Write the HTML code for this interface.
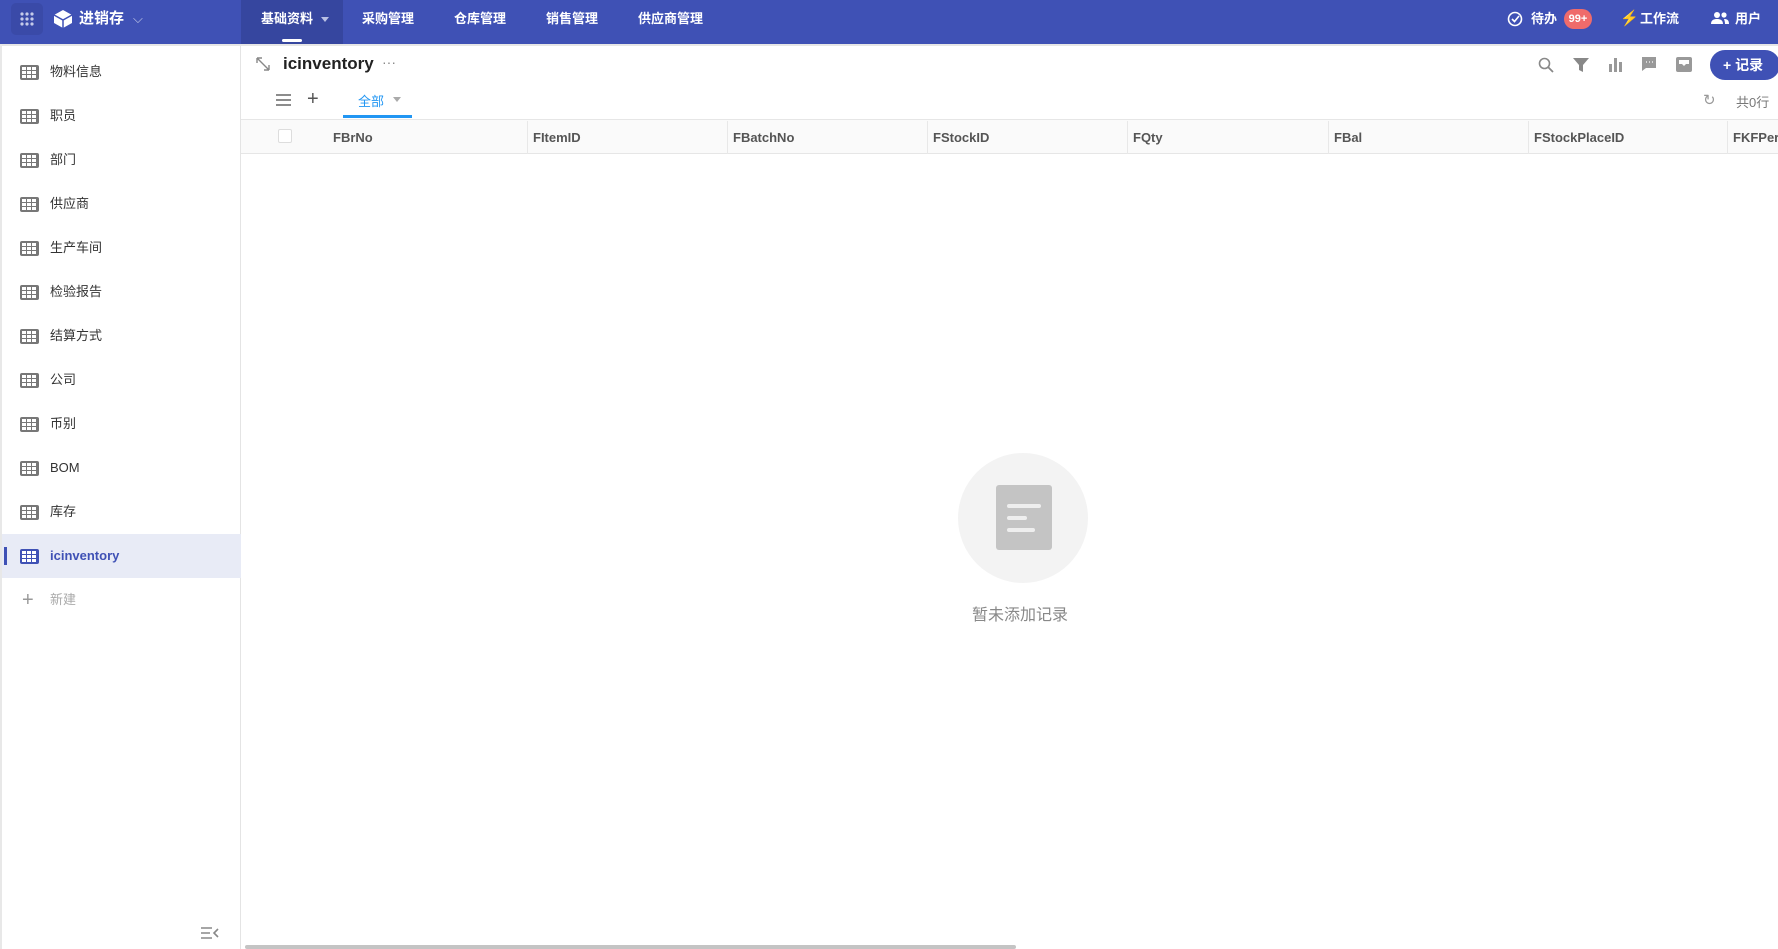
<!DOCTYPE html>
<html><head><meta charset="utf-8"><style>
*{box-sizing:border-box;margin:0;padding:0}
body{width:1778px;height:949px;overflow:hidden;background:#fff;font-family:"Liberation Sans","Noto Sans CJK SC",sans-serif;position:relative}
.hd{position:absolute;left:0;top:0;width:1778px;height:44px;background:#3f51b5;color:#fff;font-size:13px;font-weight:bold}
.hd .t{position:absolute;top:0;line-height:38px}
.side{position:absolute;left:0;top:44px;width:241px;height:905px;border-right:1px solid #e4e4e4;border-left:2px solid #e8e8e8}
.it{position:absolute;left:0;width:239px;height:44px;font-size:13px;color:#333;line-height:44px}
.it .ic{position:absolute;left:18px;top:15px;width:19px;height:15px;background:#777;border-radius:2px}
.it .ic i{position:absolute;background:#fff;width:4px;height:3px}
.it span{position:absolute;left:48px}
.th{position:absolute;top:119px;height:35px;background:#fafafa;border-top:1px solid #e6e6e6;border-bottom:1px solid #e6e6e6;left:241px;width:1537px}
.th div{position:absolute;top:1px;height:33px;line-height:33px;font-size:13px;font-weight:bold;color:#555;border-left:1px solid #e8e8e8;padding-left:5px}
</style></head><body>
<div class="hd">
 <div style="position:absolute;left:11px;top:3px;width:32px;height:32px;background:#3a4aa8;border-radius:5px"></div>
 <svg style="position:absolute;left:19px;top:11px" width="16" height="16"><g fill="#c5cbe9"><circle cx="3" cy="3" r="1.6"/><circle cx="8" cy="3" r="1.6"/><circle cx="13" cy="3" r="1.6"/><circle cx="3" cy="8" r="1.6"/><circle cx="8" cy="8" r="1.6"/><circle cx="13" cy="8" r="1.6"/><circle cx="3" cy="13" r="1.6"/><circle cx="8" cy="13" r="1.6"/><circle cx="13" cy="13" r="1.6"/></g></svg>
 <svg style="position:absolute;left:53px;top:9px" width="20" height="20"><path d="M10 1l9 5v8l-9 5-9-5V6z" fill="#fff"/><path d="M1 6l9 5 9-5M10 11v8" stroke="#3f51b5" stroke-width="1.5" fill="none"/></svg>
 <div class="t" style="left:79px;font-size:15px">进销存</div>
 <div class="t" style="left:133px;font-weight:normal;color:#c5cbe9">⌵</div>
 <div style="position:absolute;left:241px;top:0;width:102px;height:44px;background:#36469f"></div>
 <div style="position:absolute;left:282px;top:39px;width:20px;height:3px;background:#fff;border-radius:2px"></div>
 <div class="t" style="left:261px">基础资料</div>
 <div style="position:absolute;left:321px;top:17px;border:4px solid transparent;border-top:5px solid #b9c0e4"></div>
 <div class="t" style="left:362px">采购管理</div>
 <div class="t" style="left:454px">仓库管理</div>
 <div class="t" style="left:546px">销售管理</div>
 <div class="t" style="left:638px">供应商管理</div>
 <svg style="position:absolute;left:1507px;top:11px" width="16" height="16"><circle cx="8" cy="8" r="6.5" stroke="#fff" stroke-width="1.6" fill="none"/><path d="M5 8l2.5 2.5L12 5" stroke="#fff" stroke-width="1.6" fill="none"/></svg>
 <div class="t" style="left:1531px">待办</div>
 <div style="position:absolute;left:1564px;top:9px;width:28px;height:20px;border-radius:10px;background:#ef6b6b;font-size:11px;line-height:20px;text-align:center">99+</div>
 <div class="t" style="left:1620px;font-size:15px">⚡</div>
 <div class="t" style="left:1640px">工作流</div>
 <svg style="position:absolute;left:1711px;top:11px" width="18" height="14"><circle cx="6" cy="4" r="3" fill="#fff"/><circle cx="13" cy="4" r="2.6" fill="#fff"/><path d="M0 13c0-4 3-5 6-5s6 1 6 5zM13 8c3 0 5 1 5 5h-4c0-2-0.5-3.5-1-5z" fill="#fff"/></svg>
 <div class="t" style="left:1735px">用户</div>
</div>
<div style="position:absolute;left:0;top:44px;width:1778px;height:2px;background:#e6e6e6"></div>
<div class="side">
<div class="it" style="top:6px"><div class="ic"><i style="left:2px;top:2px"></i><i style="left:7px;top:2px"></i><i style="left:12px;top:2px"></i><i style="left:2px;top:6px"></i><i style="left:7px;top:6px"></i><i style="left:12px;top:6px"></i><i style="left:2px;top:10px"></i><i style="left:7px;top:10px"></i><i style="left:12px;top:10px"></i></div><span>物料信息</span></div>
<div class="it" style="top:50px"><div class="ic"><i style="left:2px;top:2px"></i><i style="left:7px;top:2px"></i><i style="left:12px;top:2px"></i><i style="left:2px;top:6px"></i><i style="left:7px;top:6px"></i><i style="left:12px;top:6px"></i><i style="left:2px;top:10px"></i><i style="left:7px;top:10px"></i><i style="left:12px;top:10px"></i></div><span>职员</span></div>
<div class="it" style="top:94px"><div class="ic"><i style="left:2px;top:2px"></i><i style="left:7px;top:2px"></i><i style="left:12px;top:2px"></i><i style="left:2px;top:6px"></i><i style="left:7px;top:6px"></i><i style="left:12px;top:6px"></i><i style="left:2px;top:10px"></i><i style="left:7px;top:10px"></i><i style="left:12px;top:10px"></i></div><span>部门</span></div>
<div class="it" style="top:138px"><div class="ic"><i style="left:2px;top:2px"></i><i style="left:7px;top:2px"></i><i style="left:12px;top:2px"></i><i style="left:2px;top:6px"></i><i style="left:7px;top:6px"></i><i style="left:12px;top:6px"></i><i style="left:2px;top:10px"></i><i style="left:7px;top:10px"></i><i style="left:12px;top:10px"></i></div><span>供应商</span></div>
<div class="it" style="top:182px"><div class="ic"><i style="left:2px;top:2px"></i><i style="left:7px;top:2px"></i><i style="left:12px;top:2px"></i><i style="left:2px;top:6px"></i><i style="left:7px;top:6px"></i><i style="left:12px;top:6px"></i><i style="left:2px;top:10px"></i><i style="left:7px;top:10px"></i><i style="left:12px;top:10px"></i></div><span>生产车间</span></div>
<div class="it" style="top:226px"><div class="ic"><i style="left:2px;top:2px"></i><i style="left:7px;top:2px"></i><i style="left:12px;top:2px"></i><i style="left:2px;top:6px"></i><i style="left:7px;top:6px"></i><i style="left:12px;top:6px"></i><i style="left:2px;top:10px"></i><i style="left:7px;top:10px"></i><i style="left:12px;top:10px"></i></div><span>检验报告</span></div>
<div class="it" style="top:270px"><div class="ic"><i style="left:2px;top:2px"></i><i style="left:7px;top:2px"></i><i style="left:12px;top:2px"></i><i style="left:2px;top:6px"></i><i style="left:7px;top:6px"></i><i style="left:12px;top:6px"></i><i style="left:2px;top:10px"></i><i style="left:7px;top:10px"></i><i style="left:12px;top:10px"></i></div><span>结算方式</span></div>
<div class="it" style="top:314px"><div class="ic"><i style="left:2px;top:2px"></i><i style="left:7px;top:2px"></i><i style="left:12px;top:2px"></i><i style="left:2px;top:6px"></i><i style="left:7px;top:6px"></i><i style="left:12px;top:6px"></i><i style="left:2px;top:10px"></i><i style="left:7px;top:10px"></i><i style="left:12px;top:10px"></i></div><span>公司</span></div>
<div class="it" style="top:358px"><div class="ic"><i style="left:2px;top:2px"></i><i style="left:7px;top:2px"></i><i style="left:12px;top:2px"></i><i style="left:2px;top:6px"></i><i style="left:7px;top:6px"></i><i style="left:12px;top:6px"></i><i style="left:2px;top:10px"></i><i style="left:7px;top:10px"></i><i style="left:12px;top:10px"></i></div><span>币别</span></div>
<div class="it" style="top:402px"><div class="ic"><i style="left:2px;top:2px"></i><i style="left:7px;top:2px"></i><i style="left:12px;top:2px"></i><i style="left:2px;top:6px"></i><i style="left:7px;top:6px"></i><i style="left:12px;top:6px"></i><i style="left:2px;top:10px"></i><i style="left:7px;top:10px"></i><i style="left:12px;top:10px"></i></div><span>BOM</span></div>
<div class="it" style="top:446px"><div class="ic"><i style="left:2px;top:2px"></i><i style="left:7px;top:2px"></i><i style="left:12px;top:2px"></i><i style="left:2px;top:6px"></i><i style="left:7px;top:6px"></i><i style="left:12px;top:6px"></i><i style="left:2px;top:10px"></i><i style="left:7px;top:10px"></i><i style="left:12px;top:10px"></i></div><span>库存</span></div>
<div class="it" style="top:490px;background:#e8ebf6;color:#3f51b5;font-weight:bold"><div style="position:absolute;left:2px;top:13px;width:3px;height:18px;background:#3f51b5"></div><div class="ic" style="background:#3f51b5"><i style="left:2px;top:2px"></i><i style="left:7px;top:2px"></i><i style="left:12px;top:2px"></i><i style="left:2px;top:6px"></i><i style="left:7px;top:6px"></i><i style="left:12px;top:6px"></i><i style="left:2px;top:10px"></i><i style="left:7px;top:10px"></i><i style="left:12px;top:10px"></i></div><span>icinventory</span></div>
<div class="it" style="top:534px;color:#aaa"><span style="left:20px;font-size:20px;color:#999">+</span><span>新建</span></div>
<svg style="position:absolute;left:199px;top:882px" width="18" height="14"><path d="M0 2h11M0 7h9M0 12h11M17 3l-4 4 4 4" stroke="#888" stroke-width="1.6" fill="none"/></svg>
</div>
<svg style="position:absolute;left:256px;top:57px" width="14" height="14"><path d="M1 1l12 12M1 1v5M1 1h5M13 13v-5M13 13h-5" stroke="#888" stroke-width="1.4" fill="none"/></svg>
<div style="position:absolute;left:283px;top:54px;font-size:17px;font-weight:bold;color:#222">icinventory</div>
<div style="position:absolute;left:382px;top:54px;font-size:14px;color:#888">···</div>
<svg style="position:absolute;left:276px;top:94px" width="15" height="12"><path d="M0 1h15M0 6h15M0 11h15" stroke="#666" stroke-width="1.5"/></svg>
<div style="position:absolute;left:307px;top:88px;font-size:20px;color:#555">+</div>
<div style="position:absolute;left:358px;top:91px;font-size:13px;color:#2196f3">全部</div>
<div style="position:absolute;left:393px;top:97px;border:4px solid transparent;border-top:5px solid #aaa"></div>
<div style="position:absolute;left:343px;top:115px;width:69px;height:3px;background:#2196f3"></div>
<svg style="position:absolute;left:1538px;top:57px" width="16" height="16"><circle cx="6.5" cy="6.5" r="5" stroke="#888" stroke-width="1.6" fill="none"/><path d="M10 10l5 5" stroke="#888" stroke-width="1.8"/></svg>
<svg style="position:absolute;left:1573px;top:57px" width="16" height="16"><path d="M0 1h16l-6 7v7l-4-2V8z" fill="#888"/></svg>
<svg style="position:absolute;left:1608px;top:57px" width="15" height="15"><path d="M1 7h3v8H1zM6 1h3v14H6zM11 5h3v10h-3z" fill="#999"/></svg>
<svg style="position:absolute;left:1641px;top:56px" width="16" height="16"><path d="M1 1h14v11H5l-4 3z" fill="#999"/><path d="M5 6h1M8 6h1M11 6h1" stroke="#fff" stroke-width="1.2"/></svg>
<svg style="position:absolute;left:1676px;top:57px" width="16" height="15"><rect x="0" y="0" width="16" height="15" rx="2" fill="#999"/><path d="M3 3h10v4h-3l-2 2-2-2H3z" fill="#fff"/></svg>
<div style="position:absolute;left:1710px;top:50px;width:70px;height:30px;border-radius:15px;background:#3f51b5;color:#fff;font-size:14px;font-weight:bold;line-height:30px;padding-left:13px">+ 记录</div>
<div style="position:absolute;left:1703px;top:91px;font-size:15px;color:#999">↻</div>
<div style="position:absolute;left:1736px;top:92px;font-size:13px;color:#777">共0行</div>
<div class="th">
<div style="left:37px;top:9px;width:14px;height:14px;border:1px solid #ddd;border-radius:2px;padding:0;background:#fff"></div>
<div style="left:87px;border:none">FBrNo</div>
<div style="left:286px">FItemID</div>
<div style="left:486px">FBatchNo</div>
<div style="left:686px">FStockID</div>
<div style="left:886px">FQty</div>
<div style="left:1087px">FBal</div>
<div style="left:1287px">FStockPlaceID</div>
<div style="left:1486px">FKFPeriod</div>
</div>
<div style="position:absolute;left:958px;top:453px;width:130px;height:130px;border-radius:50%;background:#f3f3f3"></div>
<div style="position:absolute;left:996px;top:485px;width:56px;height:65px;border-radius:3px;background:#c4c4c4"></div>
<div style="position:absolute;left:1007px;top:504px;width:34px;height:4px;border-radius:2px;background:#eee"></div>
<div style="position:absolute;left:1007px;top:516px;width:20px;height:4px;border-radius:2px;background:#eee"></div>
<div style="position:absolute;left:1007px;top:528px;width:28px;height:4px;border-radius:2px;background:#eee"></div>
<div style="position:absolute;left:972px;top:601px;font-size:16px;color:#888">暂未添加记录</div>
<div style="position:absolute;left:245px;top:945px;width:771px;height:4px;background:#c4c4c4;border-radius:2px"></div>
</body></html>
